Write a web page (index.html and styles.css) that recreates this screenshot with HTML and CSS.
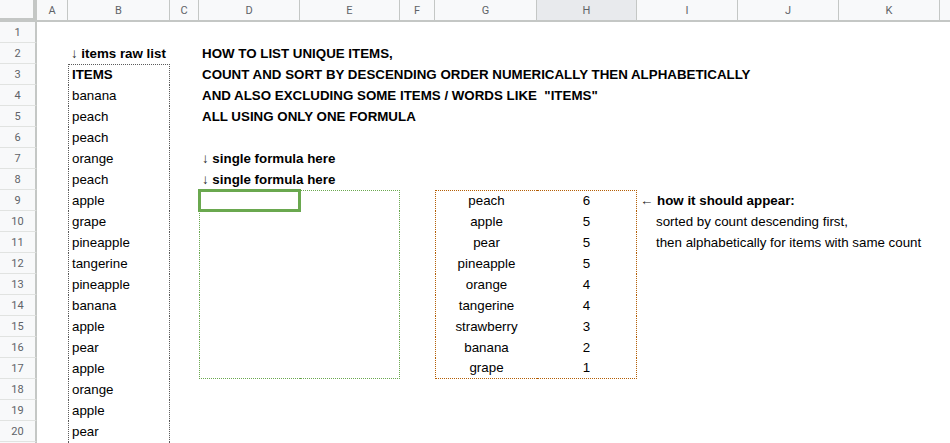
FILE: index.html
```html
<!DOCTYPE html>
<html>
<head>
    <title>unique items - sheet</title>
    <link rel="stylesheet" href="styles.css">
</head>
<body>
    <table class="sheet">
        <colgroup>
            <col style="width:37px"><col style="width:31px"><col style="width:102px"><col style="width:29px">
            <col style="width:101px"><col style="width:100px"><col style="width:35px"><col style="width:102px">
            <col style="width:100px"><col style="width:101px"><col style="width:101px"><col style="width:101px">
            <col style="width:60px">
        </colgroup>
        <thead>
            <tr>
                <th class="corner"></th>
                <th class="col">A</th><th class="col">B</th><th class="col">C</th><th class="col">D</th>
                <th class="col">E</th><th class="col">F</th><th class="col">G</th><th class="col active">H</th>
                <th class="col">I</th><th class="col">J</th><th class="col">K</th><th class="col"></th>
            </tr>
        </thead>
        <tbody>
            <tr><th class="row">1</th><td></td><td></td><td></td><td></td><td></td><td></td><td></td><td></td><td></td><td></td><td></td><td></td></tr>
            <tr><th class="row">2</th><td></td><td class="bold"><span class="arrow">↓</span> items raw list</td><td></td><td class="bold">HOW TO LIST UNIQUE ITEMS,</td><td></td><td></td><td></td><td></td><td></td><td></td><td></td><td></td></tr>
            <tr><th class="row">3</th><td></td><td class="bold gray bt bl br">ITEMS</td><td></td><td class="bold">COUNT AND SORT BY DESCENDING ORDER NUMERICALLY THEN ALPHABETICALLY</td><td></td><td></td><td></td><td></td><td></td><td></td><td></td><td></td></tr>
            <tr><th class="row">4</th><td></td><td class="gray bl br">banana</td><td></td><td class="bold">AND ALSO EXCLUDING SOME ITEMS / WORDS LIKE &nbsp;"ITEMS"</td><td></td><td></td><td></td><td></td><td></td><td></td><td></td><td></td></tr>
            <tr><th class="row">5</th><td></td><td class="gray bl br">peach</td><td></td><td class="bold">ALL USING ONLY ONE FORMULA</td><td></td><td></td><td></td><td></td><td></td><td></td><td></td><td></td></tr>
            <tr><th class="row">6</th><td></td><td class="gray bl br">peach</td><td></td><td></td><td></td><td></td><td></td><td></td><td></td><td></td><td></td><td></td></tr>
            <tr><th class="row">7</th><td></td><td class="gray bl br">orange</td><td></td><td class="bold"><span class="arrow">↓</span> single formula here</td><td></td><td></td><td></td><td></td><td></td><td></td><td></td><td></td></tr>
            <tr><th class="row">8</th><td></td><td class="gray bl br">peach</td><td></td><td class="bold"><span class="arrow">↓</span> single formula here</td><td></td><td></td><td></td><td></td><td></td><td></td><td></td><td></td></tr>
            <tr><th class="row">9</th><td></td><td class="gray bl br">apple</td><td></td><td class="green bt bl selected"></td><td class="green bt br"></td><td></td><td class="center orange bt bl">peach</td><td class="center orange bt br">6</td><td class="bold"><span class="arrow">←</span> how it should appear:</td><td></td><td></td><td></td></tr>
            <tr><th class="row">10</th><td></td><td class="gray bl br">grape</td><td></td><td class="green bl"></td><td class="green br"></td><td></td><td class="center orange bl">apple</td><td class="center orange br">5</td><td class="indent">sorted by count descending first,</td><td></td><td></td><td></td></tr>
            <tr><th class="row">11</th><td></td><td class="gray bl br">pineapple</td><td></td><td class="green bl"></td><td class="green br"></td><td></td><td class="center orange bl">pear</td><td class="center orange br">5</td><td class="indent">then alphabetically for items with same count</td><td></td><td></td><td></td></tr>
            <tr><th class="row">12</th><td></td><td class="gray bl br">tangerine</td><td></td><td class="green bl"></td><td class="green br"></td><td></td><td class="center orange bl">pineapple</td><td class="center orange br">5</td><td></td><td></td><td></td><td></td></tr>
            <tr><th class="row">13</th><td></td><td class="gray bl br">pineapple</td><td></td><td class="green bl"></td><td class="green br"></td><td></td><td class="center orange bl">orange</td><td class="center orange br">4</td><td></td><td></td><td></td><td></td></tr>
            <tr><th class="row">14</th><td></td><td class="gray bl br">banana</td><td></td><td class="green bl"></td><td class="green br"></td><td></td><td class="center orange bl">tangerine</td><td class="center orange br">4</td><td></td><td></td><td></td><td></td></tr>
            <tr><th class="row">15</th><td></td><td class="gray bl br">apple</td><td></td><td class="green bl"></td><td class="green br"></td><td></td><td class="center orange bl">strawberry</td><td class="center orange br">3</td><td></td><td></td><td></td><td></td></tr>
            <tr><th class="row">16</th><td></td><td class="gray bl br">pear</td><td></td><td class="green bl"></td><td class="green br"></td><td></td><td class="center orange bl">banana</td><td class="center orange br">2</td><td></td><td></td><td></td><td></td></tr>
            <tr><th class="row">17</th><td></td><td class="gray bl br">apple</td><td></td><td class="green bl bb"></td><td class="green br bb"></td><td></td><td class="center orange bl bb">grape</td><td class="center orange br bb">1</td><td></td><td></td><td></td><td></td></tr>
            <tr><th class="row">18</th><td></td><td class="gray bl br">orange</td><td></td><td></td><td></td><td></td><td></td><td></td><td></td><td></td><td></td><td></td></tr>
            <tr><th class="row">19</th><td></td><td class="gray bl br">apple</td><td></td><td></td><td></td><td></td><td></td><td></td><td></td><td></td><td></td><td></td></tr>
            <tr><th class="row">20</th><td></td><td class="gray bl br">pear</td><td></td><td></td><td></td><td></td><td></td><td></td><td></td><td></td><td></td><td></td></tr>
            <tr><th class="row"></th><td></td><td class="gray bl br"></td><td></td><td></td><td></td><td></td><td></td><td></td><td></td><td></td><td></td><td></td></tr>
        </tbody>
    </table>
</body>
</html>
```

FILE: styles.css
```css
body {
    margin: 0;
    overflow: hidden;
    background: #fff;
    font-family: "Liberation Sans", Arial, sans-serif;
    color: #000;
}

.sheet {
    border-collapse: separate;
    border-spacing: 0;
    table-layout: fixed;
    width: 1000px;
}

.sheet th,
.sheet td {
    box-sizing: border-box;
    padding: 0 3px;
    white-space: nowrap;
}

/* headers */
.corner {
    height: 22px;
    background: #f8f9fa;
    border-right: 4px solid #c4c7c5;
    border-bottom: 4px solid #c4c7c5;
}

.col {
    height: 22px;
    background: #f8f9fa;
    border-right: 1px solid #c4c7c5;
    border-bottom: 2px solid #c4c7c5;
    font-family: Roboto, "Liberation Sans", sans-serif;
    font-size: 11px;
    font-weight: normal;
    color: #5f6368;
    text-align: center;
    vertical-align: middle;
}

.col.active {
    background: #e8eaed;
}

.row {
    height: 21px;
    background: #f8f9fa;
    border-right: 2px solid #c4c7c5;
    border-bottom: 1px solid #e1e3e1;
    font-family: Roboto, "Liberation Sans", sans-serif;
    font-size: 11px;
    font-weight: normal;
    color: #5f6368;
    text-align: center;
    vertical-align: middle;
}

/* cells */
.sheet td {
    height: 21px;
    font-size: 10pt;
    line-height: 17px;
    vertical-align: bottom;
    padding-bottom: 2px;
}

.bold {
    font-weight: bold;
}

.center {
    text-align: center;
}

.indent {
    padding-left: 19px !important;
}

.arrow {
    font-weight: normal;
    color: #222;
}

/* range borders */
.bt { border-top: 1px dotted; }
.bb { border-bottom: 1px dotted; }
.bl { border-left: 1px dotted; }
.br { border-right: 1px dotted; }

.gray { border-color: #5b5b5b; }
.green { border-color: #6aa84f; }
.orange { border-color: #b45f06; }

.selected {
    position: relative;
}

.selected::after {
    content: '';
    position: absolute;
    top: -2px;
    left: -2px;
    right: -1px;
    bottom: -1px;
    border: 3px solid #6aa84f;
}
```
